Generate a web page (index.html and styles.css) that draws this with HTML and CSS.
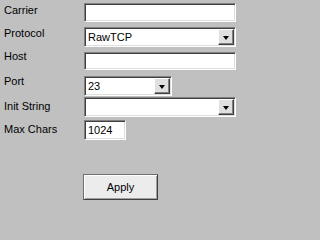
FILE: index.html
```html
<!DOCTYPE html>
<html>
<head>
<meta charset="utf-8">
<link rel="stylesheet" href="styles.css">
</head>
<body>
<div class="form">
  <div class="row r-carrier">
    <span class="label l-carrier">Carrier</span>
    <div class="field wide"></div>
  </div>
  <div class="row r-protocol">
    <span class="label l-protocol">Protocol</span>
    <div class="field combo wide"><span class="val">RawTCP</span><span class="btn"><span class="tri"></span></span></div>
  </div>
  <div class="row r-host">
    <span class="label l-host">Host</span>
    <div class="field wide short"></div>
  </div>
  <div class="row r-port">
    <span class="label l-port">Port</span>
    <div class="field combo port"><span class="val">23</span><span class="btn"><span class="tri"></span></span></div>
  </div>
  <div class="row r-init">
    <span class="label l-init">Init String</span>
    <div class="field combo wide"><span class="val"></span><span class="btn"><span class="tri"></span></span></div>
  </div>
  <div class="row r-max">
    <span class="label l-max">Max Chars</span>
    <div class="field max"><span class="val">1024</span></div>
  </div>
  <div class="actions">
    <button class="apply">Apply</button>
  </div>
</div>
</body>
</html>
```
FILE: styles.css
```css
html, body {
  margin: 0;
  padding: 0;
  background: #c0c0c0;
  width: 246px;
  height: 201px;
  overflow: hidden;
  font-family: "Liberation Sans", Arial, sans-serif;
  font-size: 11px;
  color: #000;
}
.form {
  display: flex;
  flex-direction: column;
  padding-left: 4px;
}
.row {
  display: flex;
  align-items: flex-start;
  height: 20px;
}
.label {
  width: 80px;
  line-height: 13px;
  white-space: nowrap;
}
.r-carrier { margin-top: 3px; height: 19px; }
.r-protocol { margin-top: 5px; }
.r-host { margin-top: 5px; height: 18px; }
.r-port { margin-top: 6px; }
.r-init { margin-top: 1px; }
.r-max { margin-top: 3px; }
.l-carrier { margin-top: 1px; }
.l-protocol { margin-top: 0; }
.l-host { margin-top: -2px; }
.l-port { margin-top: -1px; }
.l-init { margin-top: 3px; }
.l-max { margin-top: 3px; }

.field {
  box-sizing: border-box;
  height: 100%;
  background: #fff;
  border-top: 1px solid #808080;
  border-left: 1px solid #808080;
  border-right: 1px solid #fff;
  border-bottom: 1px solid #fff;
  box-shadow: inset 1px 1px 0 #404040, inset -1px -1px 0 #dfdfdf;
  display: flex;
  align-items: center;
  padding: 1px 1px 1px 3px;
}
.wide { width: 152px; }
.port { width: 88px; }
.max { width: 42px; }
.val {
  flex: 1;
  line-height: 13px;
  font-size: 11px;
}
.btn {
  box-sizing: border-box;
  width: 16px;
  height: 16px;
  align-self: flex-end;
  background: #e0e0e0;
  border-top: 1px solid #fff;
  border-left: 1px solid #fff;
  border-right: 1px solid #404040;
  border-bottom: 1px solid #404040;
  box-shadow: inset -1px -1px 0 #808080;
  display: flex;
  align-items: center;
  justify-content: center;
}
.tri {
  width: 0;
  height: 0;
  border-left: 3.5px solid transparent;
  border-right: 3.5px solid transparent;
  border-top: 4px solid #000;
  margin-top: 1px;
}
.actions {
  display: flex;
  margin-top: 34px;
  padding-left: 79px;
}
.apply {
  box-sizing: border-box;
  width: 75px;
  height: 26px;
  background: #ececec;
  border: 1px solid #707070;
  border-right-color: #404040;
  border-bottom-color: #404040;
  box-shadow: inset 1px 1px 0 #fff, inset -1px -1px 0 #a0a0a0;
  font-family: "Liberation Sans", Arial, sans-serif;
  font-size: 11px;
  color: #000;
  padding: 0;
  margin: 0;
}
```
